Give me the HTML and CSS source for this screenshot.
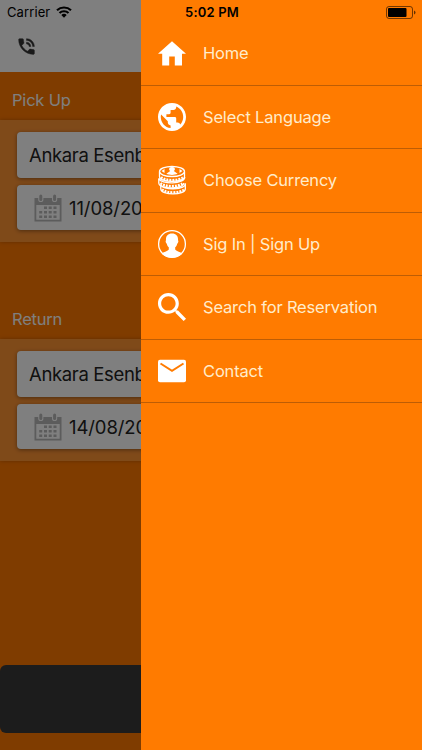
FILE: index.html
```html
<!DOCTYPE html>
<html lang="en">

<head>
    <meta charset="UTF-8">
    <meta name="viewport" content="width=device-width, initial-scale=1.0">
    <title>Rent a Car</title>
    <link rel="stylesheet" href="styles.css">
</head>

<body>
    <!-- shared calendar icon -->
    <svg class="defs" width="0" height="0">
        <symbol id="calendar" viewBox="0 0 28 28">
            <path fill-rule="evenodd" d="M0.5 4H4.200V5.500a2.600 2.600 0 0 0 5.200 0V4H18v1.500a2.600 2.600 0 0 0 5.200 0V4H27.500V27.500H.5zM2.300 11V25.700H25.700V11z" />
            <rect x="5.300" y="0.500" width="3" height="6.500" rx="1.500" />
            <rect x="19.100" y="0.500" width="3" height="6.500" rx="1.500" />
            <path d="M10 12.500h3v2.600h-3zM14.700 12.500h3v2.600h-3zM19.500 12.500h3v2.600h-3zM5.200 17h3v2.600h-3zM10 17h3v2.600h-3zM14.700 17h3v2.600h-3zM19.500 17h3v2.600h-3zM5.200 21.500h3v2.600h-3zM10 21.500h3v2.600h-3zM14.700 21.500h3v2.600h-3zM19.500 21.500h3v2.600h-3z" />
        </symbol>
    </svg>

    <div class="app">
        <!-- page under the menu -->
        <header class="header">
            <div class="carrier">
                <span>Carrier</span>
                <svg class="wifi" viewBox="0 0 16 12" fill="none" stroke="#000" stroke-width="2.200">
                    <path d="M1 4.300a10.200 10.200 0 0 1 14 0M3.500 7a6.600 6.600 0 0 1 9 0" />
                    <path d="M8 11.800L5.300 9.100a3.900 3.900 0 0 1 5.400 0z" fill="#000" stroke="none" />
                </svg>
            </div>
            <svg class="phone" viewBox="0 0 24 24">
                <path d="M20 15.500c-1.250 0-2.450-.2-3.570-.570-.350-.110-.740-.030-1.020.240l-2.200 2.200c-2.830-1.440-5.150-3.750-6.590-6.590l2.200-2.210c.280-.260.360-.650.250-1C8.700 6.450 8.500 5.250 8.500 4c0-.550-.450-1-1-1H4c-.550 0-1 .450-1 1 0 9.390 7.610 17 17 17 .550 0 1-.450 1-1v-3.500c0-.550-.450-1-1-1zM19 12h2c0-4.970-4.030-9-9-9v2c3.870 0 7 3.130 7 7zm-4 0h2c0-2.760-2.240-5-5-5v2c1.660 0 3 1.340 3 3z" />
            </svg>
        </header>

        <main class="booking">
            <section class="block">
                <h2 class="block-title">Pick Up</h2>
                <div class="panel">
                    <div class="field">Ankara Esenboga</div>
                    <div class="field date">
                        <svg class="calendar"><use href="#calendar" /></svg>
                        <span>11/08/2018</span>
                    </div>
                </div>
            </section>
            <section class="block">
                <h2 class="block-title">Return</h2>
                <div class="panel">
                    <div class="field">Ankara Esenboga</div>
                    <div class="field date">
                        <svg class="calendar"><use href="#calendar" /></svg>
                        <span>14/08/2018</span>
                    </div>
                </div>
            </section>
            <div class="submit"></div>
        </main>

        <div class="backdrop"></div>

        <!-- side menu -->
        <nav class="drawer">
            <div class="status">
                <span class="time">5:02 PM</span>
                <svg class="battery" viewBox="0 0 30 13">
                    <rect x=".5" y=".5" width="26" height="12" rx="2.500" fill="none" stroke="#000" stroke-opacity=".55" />
                    <rect x="2" y="2" width="18.500" height="9" rx="1" />
                    <path d="M28 4.500q1.500.700 1.500 2t-1.500 2z" fill-opacity=".6" />
                </svg>
            </div>
            <ul class="menu">
                <li class="item">
                    <svg class="icon" viewBox="0 0 30 30">
                        <path d="M12.200 27.500V18.500h5.600V27.500h7.200V15.800H29L15 3.300 1 15.800h4.200V27.500z" />
                    </svg>
                    <span>Home</span>
                </li>
                <li class="item">
                    <svg class="icon" viewBox="1.300 1.300 21.400 21.400">
                        <path d="M12 2C6.480 2 2 6.480 2 12s4.480 10 10 10 10-4.480 10-10S17.520 2 12 2zm-1 17.930c-3.950-.490-7-3.850-7-7.930 0-.620.080-1.210.210-1.790L9 15v1c0 1.100.900 2 2 2v1.930zm6.900-2.540c-.260-.810-1-1.390-1.900-1.390h-1v-3c0-.550-.450-1-1-1H8v-2h2c.550 0 1-.450 1-1V7h2c1.100 0 2-.900 2-2v-.410c2.930 1.190 5 4.060 5 7.410 0 2.080-.800 3.970-2.100 5.390z" />
                    </svg>
                    <span>Select Language</span>
                </li>
                <li class="item">
                    <svg class="icon" viewBox="0 0 30 30">
                        <g fill="none" stroke="#fff" stroke-width="1.300">
                            <path d="M3.800 20v4c0 6.500 24.500 6.500 24.500 0V18.500" />
                            <path d="M1.800 13.500V18c0 6.500 25 6.500 25 0M28.500 18.500c0 7-24 6.500-24.500 1.500" />
                            <path d="M2.500 7v4.500c0 6.500 25 6.500 25 0V7M1.800 13.500c2 6 26 6 26-1.500" />
                            <ellipse cx="15" cy="6.500" rx="12.500" ry="5" />
                            <path stroke-width="2.600" stroke-dasharray="1.900 1.100" d="M4 12.200c4 4 18 4 22.500 0M3.500 18.200c4 4 18 4 22.500 0M5 24.500c4 4 18 4 22.500 0" />
                        </g>
                        <path d="M12.300 3.300a3 2.200 0 0 1 5.400 0c.6 1.400-.2 2.200-.9 2.800l3.800 2.700c-3 1.500-8.200 1.500-11.200 0l3.800-2.700c-.7-.6-1.500-1.400-.9-2.800zM4.500 6l3-2v4zM25.500 6l-3-2v4z" />
                    </svg>
                    <span>Choose Currency</span>
                </li>
                <li class="item">
                    <svg class="icon" viewBox="0 0 30 30">
                        <circle cx="15" cy="15" r="13.400" fill="none" stroke="#fff" stroke-width="1.300" />
                        <path d="M15 4.500c-4.300 0-6.300 2.800-6 6.800-.7.600-.3 2.800.8 3.400.4 1.800 1.100 2.800 2 3.600v2.200c-.8 1.800-4.800 2-7 4.200C8 28 11.500 28.700 15 28.700S22 28 25.200 24.700c-2.200-2.200-6.200-2.400-7-4.200v-2.200c.9-.8 1.600-1.800 2-3.600 1.100-.6 1.500-2.800.8-3.400.3-4-1.700-6.800-6-6.800z" />
                    </svg>
                    <span>Sig In | Sign Up</span>
                </li>
                <li class="item">
                    <svg class="icon" viewBox="2.400 2.400 18.700 18.700">
                        <path d="M15.500 14h-.790l-.280-.270C15.410 12.590 16 11.110 16 9.500 16 5.910 13.090 3 9.500 3S3 5.910 3 9.500 5.910 16 9.500 16c1.610 0 3.090-.590 4.230-1.570l.270.280v.790l5 4.990L20.490 19l-4.990-5zm-6 0C7.010 14 5 11.990 5 9.500S7.010 5 9.500 5 14 7.010 14 9.500 11.990 14 9.500 14z" />
                    </svg>
                    <span>Search for Reservation</span>
                </li>
                <li class="item">
                    <svg class="icon" viewBox="0 0 30 30">
                        <rect x="1" y="3.700" width="28" height="22.600" rx="2" />
                        <path d="M3.500 7.500L15 14.800l11.500-7.300" fill="none" stroke="#ff7b00" stroke-width="2" />
                    </svg>
                    <span>Contact</span>
                </li>
            </ul>
        </nav>
    </div>
</body>

</html>
```
FILE: styles.css
```css
* {
    margin: 0;
    padding: 0;
    box-sizing: border-box;
}

body {
    font-family: Inter, "Liberation Sans", sans-serif;
}

.defs {
    position: absolute;
}

.app {
    position: relative;
    width: 422px;
    height: 750px;
    overflow: hidden;
    background-color: #ff7800;
}

/* page */
.header {
    height: 72px;
    padding: 4px 7px;
    background-color: #fff;
}

.carrier {
    display: flex;
    align-items: center;
    gap: 6px;
    height: 16px;
    font-size: 13px;
    letter-spacing: 0.1px;
}

.wifi {
    width: 16px;
    height: 12px;
}

.phone {
    display: block;
    width: 21px;
    height: 21px;
    margin: 16px 0 0 9px;
    fill: #333;
    stroke: #333;
    stroke-width: 0.5px;
}

.booking {
    display: flex;
    flex-direction: column;
    gap: 49px;
    height: 678px;
}

.block-title {
    height: 48px;
    padding-left: 12px;
    line-height: 56px;
    font-size: 16.5px;
    font-weight: 400;
    letter-spacing: -0.2px;
    color: #fff;
}

.panel {
    display: flex;
    flex-direction: column;
    gap: 7px;
    height: 122px;
    padding: 12px 17px;
    background-color: #ff9433;
    box-shadow: 0 0 4px rgba(0, 0, 0, 0.25);
}

.field {
    display: flex;
    align-items: center;
    height: 46px;
    padding-left: 12px;
    border-radius: 4px;
    background-color: #fff;
    box-shadow: 0 1px 4px rgba(0, 0, 0, 0.4);
    color: #222;
    font-size: 18.5px;
    letter-spacing: -0.35px;
    white-space: nowrap;
}

.date {
    gap: 7px;
    padding-left: 17px;
    padding-top: 1px;
    letter-spacing: -0.1px;
}

.calendar {
    width: 28px;
    height: 28px;
    fill: #b8b8b8;
}

.submit {
    height: 68px;
    margin-top: auto;
    margin-bottom: 17px;
    border-radius: 6px;
    background-color: #383838;
}

.backdrop {
    position: absolute;
    inset: 0;
    background-color: rgba(0, 0, 0, 0.5);
}

/* side menu */
.drawer {
    position: absolute;
    top: 0;
    right: 0;
    width: 281px;
    height: 750px;
    background-color: #ff7b00;
}

.status {
    display: flex;
    align-items: center;
    justify-content: space-between;
    height: 22px;
    padding: 2px 6px 0 44px;
}

.time {
    font-size: 13px;
    font-weight: 600;
    letter-spacing: 0.2px;
}

.battery {
    width: 30px;
    height: 13px;
}

.menu {
    list-style: none;
}

.item {
    display: flex;
    align-items: center;
    gap: 16px;
    height: 63.5px;
    padding-left: 16px;
    border-bottom: 1px solid #bd5d05;
    color: #ffeccb;
    font-size: 16.5px;
    letter-spacing: -0.17px;
}

.icon {
    width: 30px;
    height: 30px;
    fill: #fff;
}
```
